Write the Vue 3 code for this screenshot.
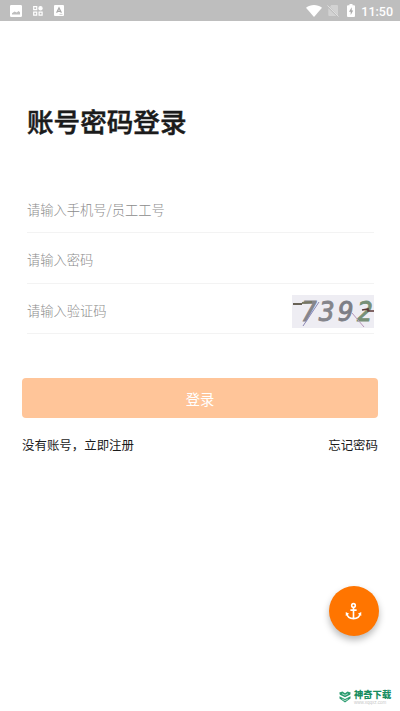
<script setup>
import { ref } from 'vue'

const fields = ref([
  { id: 'account', hint: '请输入手机号/员工工号', value: '', type: 'text' },
  { id: 'password', hint: '请输入密码', value: '', type: 'password' },
  { id: 'code', hint: '请输入验证码', value: '', type: 'text' },
])
</script>

<template>
  <div class="screen">
    <header class="status">
      <div class="status-left">
        <svg class="ic-picture" viewBox="0 0 12 12">
          <path fill="#fff" fill-rule="evenodd" d="M1.300 0h9.400A1.300 1.300 0 0 1 12 1.300v9.400a1.300 1.300 0 0 1-1.300 1.300H1.300A1.300 1.300 0 0 1 0 10.700V1.300A1.300 1.300 0 0 1 1.300 0zM2 9.500h8V7.200L8.500 6 6.800 7.500 4.500 6.500 2 8.300z" />
        </svg>
        <svg class="ic-grid" viewBox="0 0 10 10">
          <g fill="none" stroke="#fff" stroke-width="1.2">
            <path d="M.7.7h3v3h-3zM.7 6.100h3v3h-3zM6.100 6.100h3v3h-3z" />
            <circle cx="7.500" cy="2.300" r="1.600" fill="#fff" />
          </g>
        </svg>
        <svg class="ic-letter" viewBox="0 0 10 11">
          <rect width="10" height="11" rx="1" fill="#fff" />
          <path d="M2.600 7.700 5 2.900l2.400 4.800M3.500 6.300h3" fill="none" stroke="#aaa" stroke-width="1.200" />
          <path d="M5.500 9.400h3" stroke="#bbb" stroke-width=".7" />
        </svg>
      </div>
      <div class="status-right">
        <svg class="ic-wifi" viewBox="0 0 16 12">
          <path d="M0 2.800C4.600-.8 11.400-.8 16 2.800L8 12z" fill="#fff" />
        </svg>
        <svg class="ic-sim" viewBox="0 0 12 13">
          <path d="M4.200 1H10a1 1 0 0 1 1 1v9.500L3 3zM1.300 4.300 9.400 12H2.300a1 1 0 0 1-1-1z" fill="#d2d2d2" />
          <path d="m.5 1.500 11 11" stroke="#dedede" stroke-width="1" />
        </svg>
        <svg class="ic-battery" viewBox="0 0 8 13">
          <path d="M2.500 0h3v1.300H7a1 1 0 0 1 1 1V12a1 1 0 0 1-1 1H1a1 1 0 0 1-1-1V2.300a1 1 0 0 1 1-1h1.500z" fill="#fff" />
          <path d="M4.700 3.200 2 7.700h1.700v3.200L6.200 6.400H4.700z" fill="#aaa" />
        </svg>
        <span class="clock">11:50</span>
      </div>
    </header>

    <main class="content">
      <h1 class="title">账号密码登录</h1>

      <form class="form" @submit.prevent>
        <div class="fields">
          <div v-for="f in fields" :key="f.id" class="field">
            <input v-model="f.value" class="input" :type="f.type" :placeholder="f.hint" />
            <svg v-if="f.id === 'code'" class="captcha" viewBox="0 0 82 33">
              <rect width="82" height="33" fill="#eeedf3" />
              <g class="digits">
                <text x="9" y="26" fill="#85858b" stroke="#85858b">7</text>
                <text x="27" y="26" fill="#85858b" stroke="#85858b">3</text>
                <text x="46" y="26" fill="#7d7e86" stroke="#7d7e86">9</text>
                <text x="65" y="26" fill="#779077" stroke="#779077">2</text>
              </g>
              <g fill="none">
                <path d="M1 9h9" stroke="#50483a" stroke-width="1.700" />
                <path d="m10 8 10-1" stroke="#777862" stroke-width="2" />
                <path d="M11 31 27 7" stroke="#8d87b4" stroke-width="1" />
                <path d="m60 18 12 14" stroke="#b795b9" stroke-width="1" />
                <path d="m70 15 6-1v2h6" stroke="#5c3936" stroke-width="1.600" />
              </g>
            </svg>
          </div>
        </div>
        <button class="submit" type="submit">登录</button>
      </form>

      <nav class="links">
        <a>没有账号，立即注册</a>
        <a>忘记密码</a>
      </nav>
    </main>

    <button class="fab">
      <svg viewBox="0 0 18 20">
        <g fill="none" stroke="#fff" stroke-width="1.700">
          <circle cx="9" cy="3.600" r="1.900" />
          <path d="M9 5.500v12M5.700 8.500h6.600M2 12.200c.5 3.300 3.500 5.300 7 5.300s6.500-2 7-5.300" />
        </g>
        <path d="M.8 10.500v4.200l3.600-2.400zM17.200 10.500v4.200l-3.600-2.400z" fill="#fff" />
      </svg>
    </button>

    <div class="brand">
      <svg viewBox="0 0 12 12">
        <path d="M.3 1.500 3.500.5 6 2.300 8.500.5l3.200 1-.5 2.200L6 6.200.8 3.700zM.5 5.200 6 8l5.500-2.800v2.300L6 11.500.5 7.500z" fill="#2b9c70" />
        <path d="m3 2.700 3 1.500 3-1.500M3.200 8.100 6 9.700l2.800-1.600" fill="none" stroke="#e5f3ed" stroke-width=".7" />
      </svg>
      <div class="brand-text">
        <span class="brand-name">神奇下载</span>
        <span class="brand-url">www.xqqxz.com</span>
      </div>
    </div>
  </div>
</template>

<style>
body {
  background: #fff;
}
</style>

<style scoped>
.screen {
  position: relative;
  height: 711px;
  overflow: hidden;
  background: #fff;
  color: #1b1b1b;
  font-family: "Noto Sans CJK SC", sans-serif;
}
.status {
  display: flex;
  justify-content: space-between;
  height: 21px;
  padding: 0 7px 0 10px;
  background: #bebebe;
}
.status-left,
.status-right {
  display: flex;
  align-items: center;
}
svg {
  display: block;
  flex: none;
}
.ic-picture {
  width: 12px;
  height: 12px;
}
.ic-grid {
  width: 10px;
  height: 10px;
  margin-left: 11px;
}
.ic-letter {
  width: 10px;
  height: 11px;
  margin-left: 11px;
}
.ic-wifi {
  width: 16px;
  height: 12px;
}
.ic-sim {
  width: 12px;
  height: 13px;
  margin-left: 5px;
}
.ic-battery {
  width: 8px;
  height: 13px;
  margin-left: 8px;
}
.clock {
  margin-left: 6px;
  padding-top: 1px;
  color: #fff;
  font: 500 12.500px/19px Roboto, sans-serif;
}
.content {
  padding: 0 22px;
}
.title {
  margin: 80px 5px 0;
  font-size: 26.600px;
  font-weight: 500;
  line-height: 40px;
  -webkit-text-stroke: 0.5px #1b1b1b;
}
.fields {
  padding: 43px 4px 0 5px;
}
.field {
  display: flex;
  align-items: center;
  box-sizing: border-box;
  height: 50.500px;
  padding-top: 5px;
  border-bottom: 1px solid #f3f3f3;
}
.field:first-child {
  height: 49px;
  padding-top: 4px;
}
.field:last-child {
  padding-top: 6px;
}
.input {
  flex: 1;
  min-width: 0;
  height: 30px;
  padding: 0;
  border: 0;
  outline: 0;
  background: none;
  font: 300 13.250px/30px "Noto Sans CJK SC", sans-serif;
}
.input::placeholder {
  color: #8c8c8c;
  opacity: 1;
}
.captcha {
  width: 82px;
  height: 33px;
}
.digits {
  font: italic 400 26px "DejaVu Sans Mono", monospace;
  stroke-width: 0.9px;
}
.submit {
  display: block;
  width: 100%;
  height: 40px;
  margin-top: 44px;
  padding: 1px 0 0;
  border: 0;
  border-radius: 4px;
  background: #ffc599;
  color: #fff;
  font: 400 14.300px/39px "Noto Sans CJK SC", sans-serif;
}
.links {
  display: flex;
  justify-content: space-between;
  padding-top: 17px;
  font-size: 12.440px;
  line-height: 20px;
}
.fab {
  position: absolute;
  left: 329px;
  top: 586px;
  display: flex;
  align-items: center;
  justify-content: center;
  width: 50px;
  height: 50px;
  padding: 0 1px 0 0;
  border: 0;
  border-radius: 50%;
  background: #ff7500;
  box-shadow: 0 4px 7px rgba(0, 0, 0, 0.28);
}
.fab svg {
  width: 17px;
  height: 19px;
}
.brand {
  position: absolute;
  left: 339px;
  top: 688px;
  display: flex;
  align-items: center;
  gap: 3px;
}
.brand > svg {
  width: 12px;
  height: 12px;
}
.brand-text {
  display: flex;
  flex-direction: column;
}
.brand-name {
  color: #188d60;
  font: 900 9.300px/13px "Noto Sans CJK SC", sans-serif;
}
.brand-url {
  color: #c8c8c8;
  font: 4.500px/4px "Liberation Sans", sans-serif;
}
</style>
